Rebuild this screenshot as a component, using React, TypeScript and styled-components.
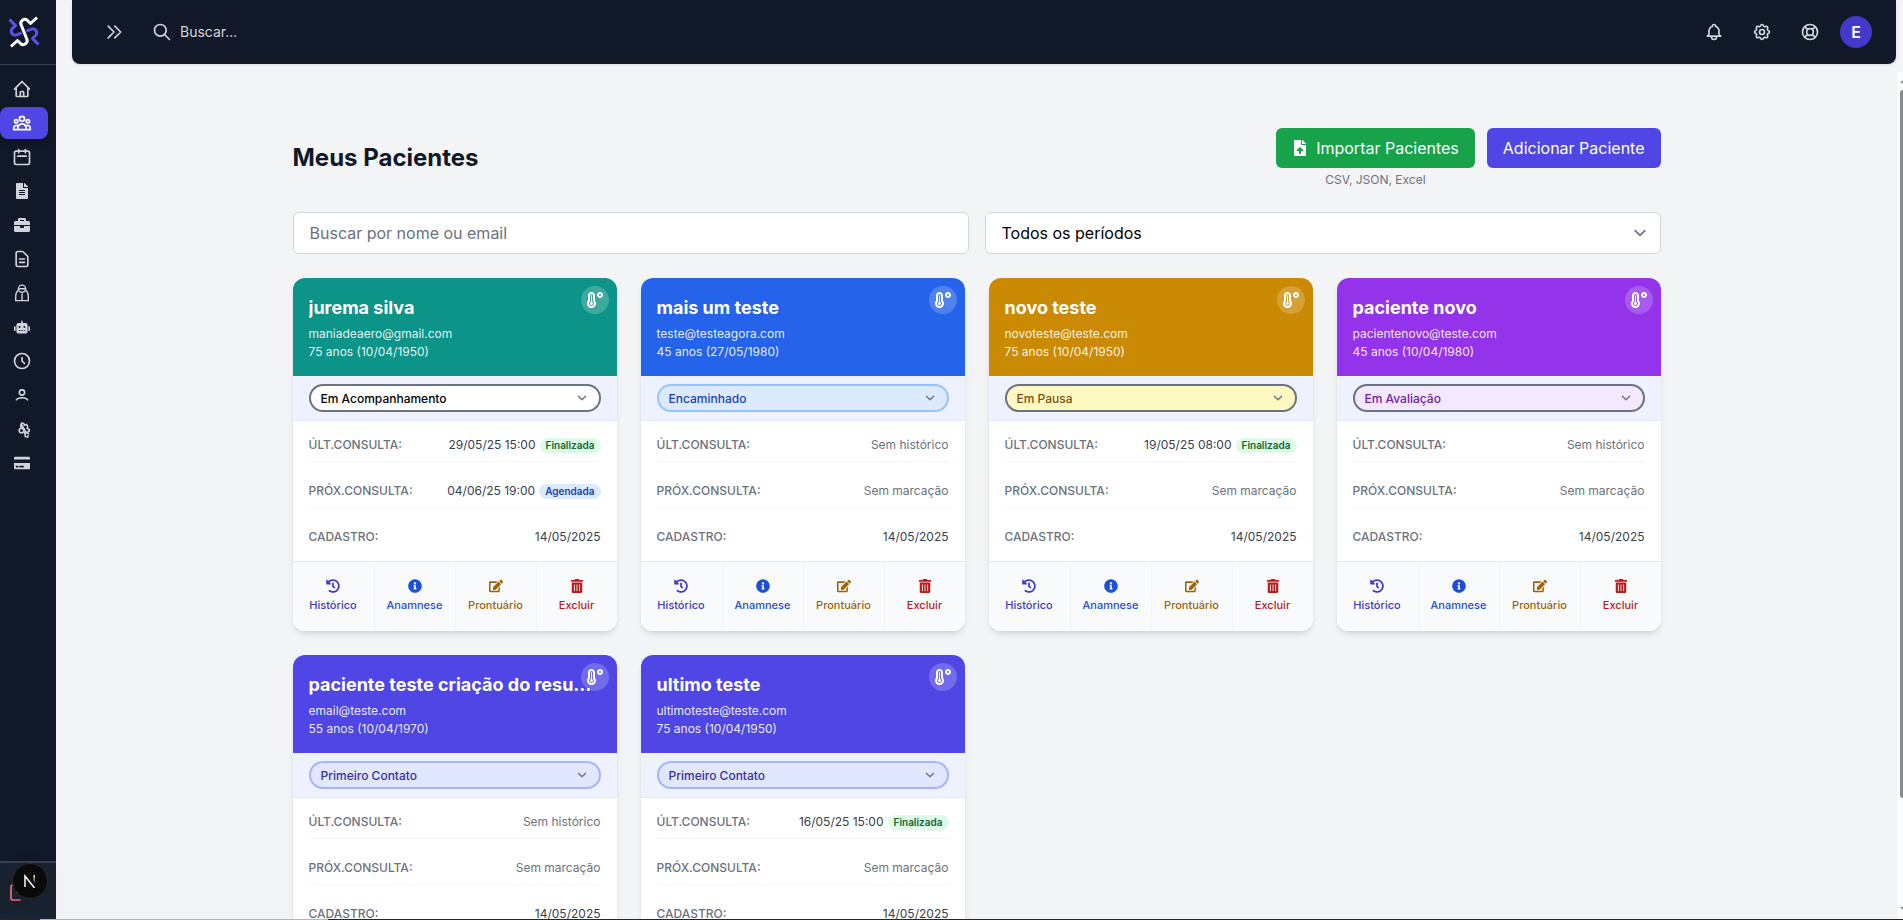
import React from "react";
import styled, { createGlobalStyle } from "styled-components";
import {
  HiOutlineHome, HiOutlineUserGroup, HiOutlineCalendar, HiOutlineDocumentText,
  HiOutlineClock, HiOutlineBell, HiOutlineCog, HiOutlineSupport,
  HiOutlineSearch, HiOutlineChevronDoubleRight,
} from "react-icons/hi";
import {
  FaFileAlt, FaBriefcase, FaRobot, FaCreditCard, FaTemperatureHigh, FaHistory,
  FaInfoCircle, FaEdit, FaTrashAlt, FaFileUpload,
} from "react-icons/fa";

const GlobalStyle = createGlobalStyle`
  *, *::before, *::after { box-sizing: border-box; }
  body {
    margin: 0;
    background: #f3f4f6;
    color: #111827;
    font-family: Inter, "Liberation Sans", sans-serif;
    overflow: hidden;
  }
  button, input, select { font: inherit; }
`;

const Frame = styled.div`
  display: flex;
  flex-direction: column;
  height: 100vh;
`;

const Shell = styled.div`
  display: flex;
  flex: 1;
  min-height: 0;
`;

const BottomEdge = styled.div`
  flex: none;
  height: 1px;
  background: linear-gradient(to right, #27272a 40px, #b4b4b4 40px 328px, #27272a 328px);
`;

const Sidebar = styled.aside`
  display: flex;
  flex-direction: column;
  flex: none;
  width: 56px;
  background: #111827;
`;

const LogoBar = styled.div`
  height: 65px;
  padding: 16px 8px;
  border-bottom: 1px solid #374151;
`;

const Nav = styled.nav`
  display: flex;
  flex: 1;
  flex-direction: column;
  gap: 2px;
  padding: 8px 8px 8px 0;
`;

const NavLink = styled.a<{ $active?: boolean }>`
  display: flex;
  align-items: center;
  height: 32px;
  padding-left: 12px;
  border-radius: 8px;
  color: ${(p) => (p.$active ? "#ffffff" : "#d1d5db")};
  background: ${(p) => (p.$active ? "#4f46e5" : "transparent")};
  box-shadow: ${(p) => (p.$active ? "0 4px 6px rgba(0, 0, 0, 0.2)" : "none")};
`;

const IconSlot = styled.span`
  display: flex;
  align-items: center;
  justify-content: center;
  width: 20px;
  height: 20px;
`;

const SidebarFooter = styled.div`
  position: relative;
  flex: none;
  height: 58px;
  border-top: 2px solid #374151;
  background: #1a2331;
`;

const LogoutButton = styled.button`
  display: flex;
  padding: 20px 8px 16px;
  border: 0;
  background: none;
  color: #f87171;
`;

const DevBadge = styled.button`
  position: absolute;
  top: 0;
  left: 12px;
  display: flex;
  align-items: center;
  justify-content: center;
  width: 36px;
  height: 36px;
  padding: 0;
  border: 1px solid #2b2b2b;
  border-radius: 50%;
  background: #0a0a0a;
  box-shadow: 0 8px 24px rgba(0, 0, 0, 0.12);
`;

const Main = styled.div`
  display: flex;
  flex: 1;
  flex-direction: column;
  gap: 8px;
  min-width: 0;
`;

const TopBar = styled.header`
  display: flex;
  align-items: center;
  justify-content: space-between;
  flex: none;
  height: 64px;
  margin: 0 7px 0 16px;
  padding: 0 24px 0 32px;
  border-radius: 0 0 8px 8px;
  background: #111827;
  box-shadow: 0 1px 3px rgba(0, 0, 0, 0.1);
`;

const BarGroup = styled.div`
  display: flex;
  align-items: center;
  gap: 28px;
`;

const IconButton = styled.button`
  display: flex;
  padding: 0;
  border: 0;
  background: none;
  color: #d1d5db;
`;

const SearchLabel = styled.label`
  display: flex;
  align-items: center;
  gap: 8px;
  color: #d1d5db;
`;

const SearchInput = styled.input`
  width: 240px;
  padding: 0;
  border: 0;
  outline: 0;
  background: none;
  color: #d1d5db;
  font-size: 14px;
  line-height: 20px;
  &::placeholder { color: #d1d5db; opacity: 1; }
`;

const Avatar = styled.button`
  width: 32px;
  height: 32px;
  margin-left: -8px;
  padding: 0;
  border: 0;
  border-radius: 50%;
  background: #4338ca;
  color: #ffffff;
  font-size: 16px;
  font-weight: 600;
`;

const ScrollArea = styled.div`
  display: flex;
  flex: 1;
  min-height: 0;
`;

const Viewport = styled.main`
  flex: 1;
  min-width: 0;
  overflow-y: auto;
  scrollbar-width: none;
`;

const ScrollTrack = styled.div`
  display: flex;
  flex-direction: column;
  align-items: flex-end;
  flex: none;
  width: 6px;
  overflow: hidden;
  background: #fcfcfc;
`;

const ScrollThumb = styled.div`
  flex: 708;
  width: 3px;
  border-radius: 4px 0 0 4px;
  background: #8b8b8b;
`;

const ScrollRest = styled.div`
  flex: 109;
`;

const ScrollArrow = styled.div<{ $down?: boolean }>`
  width: 3px;
  height: ${(p) => (p.$down ? 12 : 18)}px;
  padding-top: ${(p) => (p.$down ? 0 : 8)}px;
  &::before {
    content: "";
    display: block;
    border: 3px solid transparent;
    border-right-width: 0;
    ${(p) => (p.$down ? "border-top-color: #8b8b8b; border-bottom-width: 0;" : "border-bottom-color: #8b8b8b; border-top-width: 0;")}
  }
`;

const Page = styled.div`
  display: flex;
  flex-direction: column;
  gap: 24px;
  max-width: 1400px;
  margin: 0 auto;
  padding: 56px 16px 32px;
`;

const PageHead = styled.div`
  display: flex;
  align-items: center;
  justify-content: space-between;
`;

const Title = styled.h1`
  margin: 0;
  font-size: 24px;
  line-height: 32px;
  font-weight: 700;
`;

const Actions = styled.div`
  display: flex;
  align-items: flex-start;
  gap: 12px;
`;

const ActionColumn = styled.div`
  display: flex;
  flex-direction: column;
  align-items: center;
  gap: 4px;
`;

const ActionButton = styled.button<{ $color: string }>`
  display: flex;
  align-items: center;
  gap: 8px;
  height: 40px;
  padding: 0 16px;
  border: 0;
  border-radius: 6px;
  background: ${(p) => p.$color};
  color: #ffffff;
  font-size: 16px;
  line-height: 24px;
`;

const Hint = styled.span`
  color: #6b7280;
  font-size: 12px;
  line-height: 16px;
`;

const Filters = styled.div`
  display: grid;
  grid-template-columns: 1fr 1fr;
  gap: 16px;
`;

const FilterInput = styled.input`
  width: 100%;
  height: 42px;
  padding: 0 16px;
  border: 1px solid #d1d5db;
  border-radius: 6px;
  background: #ffffff;
  font-size: 16px;
  &::placeholder { color: #6b7280; opacity: 1; }
`;

const SelectWrap = styled.div`
  position: relative;
  display: flex;
`;

const Chevron = styled.svg<{ $right: number }>`
  position: absolute;
  top: 50%;
  right: ${(p) => p.$right}px;
  transform: translateY(-50%);
  pointer-events: none;
`;

const PeriodSelect = styled.select`
  width: 100%;
  height: 42px;
  padding: 0 40px 0 16px;
  border: 1px solid #d1d5db;
  border-radius: 6px;
  appearance: none;
  background: #ffffff;
  color: #000000;
  font-size: 16px;
`;

const CardGrid = styled.div`
  display: grid;
  grid-template-columns: repeat(4, minmax(0, 1fr));
  gap: 24px;
`;

const Card = styled.article`
  overflow: hidden;
  border-radius: 12px;
  background: #ffffff;
  box-shadow: 0 4px 6px -1px rgba(0, 0, 0, 0.1), 0 2px 4px -2px rgba(0, 0, 0, 0.1);
`;

const CardHead = styled.header<{ $color: string }>`
  position: relative;
  display: flex;
  flex-direction: column;
  gap: 2px;
  padding: 16px;
  background: ${(p) => p.$color};
`;

const Name = styled.h2`
  margin: 0 0 2px;
  overflow: hidden;
  color: #ffffff;
  font-size: 18px;
  line-height: 28px;
  font-weight: 700;
  text-overflow: ellipsis;
  white-space: nowrap;
`;

const Detail = styled.span`
  color: rgba(255, 255, 255, 0.9);
  font-size: 12px;
  line-height: 16px;
`;

const TempBadge = styled.button`
  position: absolute;
  top: 8px;
  right: 8px;
  display: flex;
  align-items: center;
  justify-content: center;
  width: 28px;
  height: 28px;
  padding: 0;
  border: 0;
  border-radius: 50%;
  background: rgba(255, 255, 255, 0.2);
  color: #ffffff;
`;

const StatusBar = styled.div`
  padding: 8px 16px;
  border-bottom: 1px solid #e0e7ff;
  background: #eef2ff;
`;

const StatusSelect = styled.select<{ $fg: string; $bg: string; $line: string }>`
  width: 100%;
  height: 28px;
  padding: 0 32px 0 10px;
  border: 2px solid ${(p) => p.$line};
  border-radius: 14px;
  appearance: none;
  background: ${(p) => p.$bg};
  color: ${(p) => p.$fg};
  font-size: 12px;
  font-weight: 500;
`;

const Facts = styled.dl`
  display: flex;
  flex-direction: column;
  gap: 13px;
  margin: 0;
  padding: 8px 16px;
`;

const Fact = styled.div`
  display: flex;
  align-items: center;
  justify-content: space-between;
  padding: 8px 0;
  border-bottom: 1px solid #f3f4f6;
  font-size: 12px;
  line-height: 16px;
  &:last-child { border-bottom: 0; }
`;

const FactLabel = styled.dt`
  color: #6b7280;
  font-weight: 500;
`;

const FactValue = styled.dd<{ $muted?: boolean }>`
  display: flex;
  align-items: center;
  gap: 4px;
  margin: 0;
  color: ${(p) => (p.$muted ? "#6b7280" : "#374151")};
`;

const Tag = styled.span<{ $kind: string }>`
  padding: 0 6px;
  border-radius: 8px;
  background: ${(p) => (p.$kind === "Finalizada" ? "#dcfce7" : "#dbeafe")};
  color: ${(p) => (p.$kind === "Finalizada" ? "#166534" : "#1e40af")};
  font-size: 10px;
  line-height: 15px;
  font-weight: 600;
`;

const CardActions = styled.footer`
  display: grid;
  grid-template-columns: repeat(4, 1fr);
  height: 70px;
  border-top: 1px solid #e5e7eb;
  background: #f9fafb;
`;

const CardAction = styled.button<{ $color: string }>`
  display: flex;
  flex-direction: column;
  align-items: center;
  justify-content: center;
  gap: 4px;
  padding: 0 0 1px;
  border: 0;
  border-left: 1px solid #f3f4f6;
  background: none;
  color: ${(p) => p.$color};
  font-size: 11px;
  line-height: 16px;
  font-weight: 500;
  &:first-child { border-left: 0; }
`;

const statusStyles = {
  "Em Acompanhamento": { head: "#0d9488", fg: "#000000", bg: "#ffffff", line: "#6b7280" },
  Encaminhado: { head: "#2563eb", fg: "#1e40af", bg: "#dbeafe", line: "#93c5fd" },
  "Em Pausa": { head: "#ca8a04", fg: "#854d0e", bg: "#fef9c3", line: "#6b7280" },
  "Em Avaliação": { head: "#9333ea", fg: "#6b21a8", bg: "#f3e8ff", line: "#6b7280" },
  "Primeiro Contato": { head: "#4f46e5", fg: "#3730a3", bg: "#e0e7ff", line: "#a5b4fc" },
};

type Status = keyof typeof statusStyles;
type Visit = { when: string; tag: string };
type Patient = { name: string; email: string; age: string; status: Status; last?: Visit; next?: Visit };

const patients: Patient[] = [
  {
    name: "jurema silva", email: "maniadeaero@gmail.com", age: "75 anos (10/04/1950)", status: "Em Acompanhamento",
    last: { when: "29/05/25 15:00", tag: "Finalizada" }, next: { when: "04/06/25 19:00", tag: "Agendada" },
  },
  { name: "mais um teste", email: "teste@testeagora.com", age: "45 anos (27/05/1980)", status: "Encaminhado" },
  {
    name: "novo teste", email: "novoteste@teste.com", age: "75 anos (10/04/1950)", status: "Em Pausa",
    last: { when: "19/05/25 08:00", tag: "Finalizada" },
  },
  { name: "paciente novo", email: "pacientenovo@teste.com", age: "45 anos (10/04/1980)", status: "Em Avaliação" },
  { name: "paciente teste criação do resumo", email: "email@teste.com", age: "55 anos (10/04/1970)", status: "Primeiro Contato" },
  {
    name: "ultimo teste", email: "ultimoteste@teste.com", age: "75 anos (10/04/1950)", status: "Primeiro Contato",
    last: { when: "16/05/25 15:00", tag: "Finalizada" },
  },
];

const Logo = () => (
  <svg width="32" height="32" viewBox="0 0 32 32" fill="none" strokeWidth="3" strokeLinejoin="round">
    <path
      d="M1.500 3.500L7.500 9.500 4.200 12.700A4 4 0 0 0 9.200 18.700L22.800 13.300A4 4 0 0 1 27.800 19.300L24.500 22.500 30.500 28.500"
      stroke="#5b50ee"
    />
    <path d="M13.300 9.200L18.700 22.800" stroke="#111827" strokeWidth="5" />
    <path
      d="M29 1.500L22.500 7.500 19.300 4.200A4 4 0 0 0 13.300 9.200L18.700 22.800A4 4 0 0 1 12.700 27.800L9.500 24.500 3 30.500"
      stroke="#ffffff"
    />
  </svg>
);

const PadlockIcon = () => (
  <svg width="20" height="20" viewBox="0 0 20 20" fill="none" stroke="currentColor" strokeWidth="1.4">
    <circle cx="10" cy="5.7" r="3.6" />
    <path d="M6.6 5.8h6.8M6.6 7C4.6 8.600 3.700 10.500 3.700 13v4.600h12.600V13c0-2.500-.9-4.400-2.900-6M10 10.500v7" />
  </svg>
);

const PersonIcon = () => (
  <svg width="20" height="20" viewBox="0 0 20 20" fill="none" stroke="currentColor" strokeWidth="1.6">
    <circle cx="10" cy="7.500" r="2.600" />
    <path d="M4 15.400c1-1.800 3.200-2.700 6-2.700s5 .9 6 2.700" />
  </svg>
);

const BrokenGearIcon = () => (
  <svg width="20" height="20" viewBox="0 0 20 20" fill="none" stroke="currentColor" strokeWidth="1.600" strokeLinejoin="round">
    <circle cx="9.500" cy="11.500" r="2.300" />
    <path d="M9.500 9.200L8.600 6.600 9.600 4l2.100.6.7 1.600 2.300-.6 1 1.900-.6 1.900 2.200 1.100-.2 1.800-1.800.4M9 5l5.500 9 2.700.6M12 12.500l1 2.700.4 2.500 2.300.3.600-2" />
  </svg>
);

const navItems = [
  { label: "Início", icon: <HiOutlineHome size={20} /> },
  { label: "Pacientes", icon: <HiOutlineUserGroup size={20} />, active: true },
  { label: "Agenda", icon: <HiOutlineCalendar size={20} /> },
  { label: "Prontuários", icon: <FaFileAlt size={16} /> },
  { label: "Serviços", icon: <FaBriefcase size={16} /> },
  { label: "Documentos", icon: <HiOutlineDocumentText size={20} /> },
  { label: "Acessos", icon: <PadlockIcon /> },
  { label: "Assistente", icon: <FaRobot size={16} /> },
  { label: "Horários", icon: <HiOutlineClock size={20} /> },
  { label: "Perfil", icon: <PersonIcon /> },
  { label: "Integrações", icon: <BrokenGearIcon /> },
  { label: "Pagamentos", icon: <FaCreditCard size={16} /> },
];

const Arrow = ({ size, right }: { size: number; right: number }) => (
  <Chevron $right={right} width={size} height={size} viewBox="0 0 20 20" fill="none" stroke="#6b7280" strokeWidth="1.500" strokeLinecap="round" strokeLinejoin="round">
    <path d="M6 8l4 4 4-4" />
  </Chevron>
);

const VisitValue = ({ visit, empty }: { visit?: Visit; empty: string }) =>
  visit ? (
    <FactValue>
      {visit.when}
      <Tag $kind={visit.tag}>{visit.tag}</Tag>
    </FactValue>
  ) : (
    <FactValue $muted>{empty}</FactValue>
  );

const PatientCard = ({ patient }: { patient: Patient }) => {
  const look = statusStyles[patient.status];
  return (
    <Card>
      <CardHead $color={look.head}>
        <Name>{patient.name}</Name>
        <Detail>{patient.email}</Detail>
        <Detail>{patient.age}</Detail>
        <TempBadge aria-label="Temperatura"><FaTemperatureHigh size={16} /></TempBadge>
      </CardHead>
      <StatusBar>
        <SelectWrap>
          <StatusSelect aria-label={`Status de ${patient.name}`} defaultValue={patient.status} $fg={look.fg} $bg={look.bg} $line={look.line}>
            {Object.keys(statusStyles).map((s) => <option key={s}>{s}</option>)}
          </StatusSelect>
          <Arrow size={18} right={10} />
        </SelectWrap>
      </StatusBar>
      <Facts>
        <Fact><FactLabel>ÚLT.CONSULTA:</FactLabel><VisitValue visit={patient.last} empty="Sem histórico" /></Fact>
        <Fact><FactLabel>PRÓX.CONSULTA:</FactLabel><VisitValue visit={patient.next} empty="Sem marcação" /></Fact>
        <Fact><FactLabel>CADASTRO:</FactLabel><FactValue>14/05/2025</FactValue></Fact>
      </Facts>
      <CardActions>
        <CardAction $color="#4338ca"><FaHistory size={14} />Histórico</CardAction>
        <CardAction $color="#1d4ed8"><FaInfoCircle size={14} />Anamnese</CardAction>
        <CardAction $color="#a16207"><FaEdit size={14} />Prontuário</CardAction>
        <CardAction $color="#b91c1c"><FaTrashAlt size={14} />Excluir</CardAction>
      </CardActions>
    </Card>
  );
};

export default function App() {
  return (
    <Frame>
      <GlobalStyle />
      <Shell>
        <Sidebar>
          <LogoBar><Logo /></LogoBar>
          <Nav aria-label="Principal">
            {navItems.map((item) => (
              <NavLink key={item.label} href="#" aria-label={item.label} $active={item.active}>
                <IconSlot>{item.icon}</IconSlot>
              </NavLink>
            ))}
          </Nav>
          <SidebarFooter>
            <LogoutButton aria-label="Sair">
              <svg width="20" height="20" viewBox="0 0 20 20" fill="none" stroke="currentColor" strokeWidth="1.700" strokeLinecap="round">
                <path d="M12 2H5a2 2 0 0 0-2 2v11a2 2 0 0 0 2 2h7M9 9.500h9" />
              </svg>
            </LogoutButton>
            <DevBadge aria-label="Ferramentas de desenvolvimento">
              <svg width="14" height="14" viewBox="0 0 14 14" fill="none" strokeWidth="1.500">
                <defs>
                  <linearGradient id="fade" x1="0" y1="0" x2="0" y2="1">
                    <stop offset="0" stopColor="#fff" />
                    <stop offset="1" stopColor="#fff" stopOpacity="0" />
                  </linearGradient>
                </defs>
                <path d="M2 13V2l9.500 12" stroke="#ffffff" />
                <rect x="10.500" y="1" width="1.500" height="9" fill="url(#fade)" />
              </svg>
            </DevBadge>
          </SidebarFooter>
        </Sidebar>
        <Main>
          <TopBar>
            <BarGroup>
              <IconButton aria-label="Expandir menu"><HiOutlineChevronDoubleRight size={20} /></IconButton>
              <SearchLabel>
                <HiOutlineSearch size={20} />
                <SearchInput placeholder="Buscar..." aria-label="Buscar" />
              </SearchLabel>
            </BarGroup>
            <BarGroup>
              <IconButton aria-label="Notificações"><HiOutlineBell size={20} /></IconButton>
              <IconButton aria-label="Configurações"><HiOutlineCog size={20} /></IconButton>
              <IconButton aria-label="Ajuda"><HiOutlineSupport size={20} /></IconButton>
              <Avatar>E</Avatar>
            </BarGroup>
          </TopBar>
          <ScrollArea>
            <Viewport>
              <Page>
                <PageHead>
                  <Title>Meus Pacientes</Title>
                  <Actions>
                    <ActionColumn>
                      <ActionButton $color="#16a34a"><FaFileUpload size={16} />Importar Pacientes</ActionButton>
                      <Hint>CSV, JSON, Excel</Hint>
                    </ActionColumn>
                    <ActionButton $color="#4f46e5">Adicionar Paciente</ActionButton>
                  </Actions>
                </PageHead>
                <Filters>
                  <FilterInput placeholder="Buscar por nome ou email" aria-label="Buscar por nome ou email" />
                  <SelectWrap>
                    <PeriodSelect aria-label="Período"><option>Todos os períodos</option></PeriodSelect>
                    <Arrow size={24} right={9} />
                  </SelectWrap>
                </Filters>
                <CardGrid>
                  {patients.map((p) => <PatientCard key={p.email} patient={p} />)}
                </CardGrid>
              </Page>
            </Viewport>
            <ScrollTrack aria-hidden="true">
              <ScrollArrow />
              <ScrollThumb />
              <ScrollRest />
              <ScrollArrow $down />
            </ScrollTrack>
          </ScrollArea>
        </Main>
      </Shell>
      <BottomEdge />
    </Frame>
  );
}
